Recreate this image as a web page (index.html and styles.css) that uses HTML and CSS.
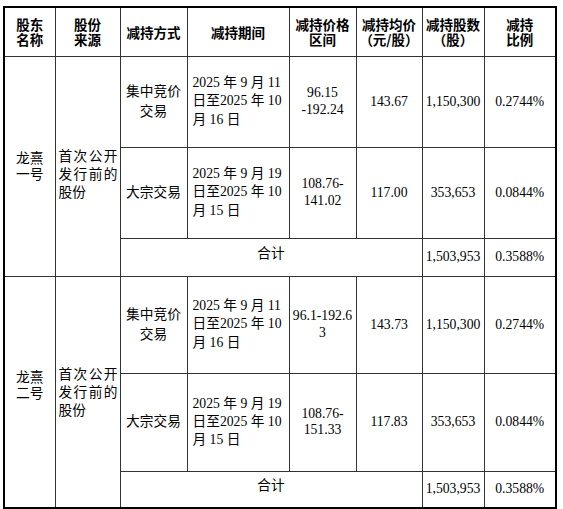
FILE: index.html
```html
<!DOCTYPE html>
<html lang="zh-CN">
<head>
<meta charset="utf-8">
<title>减持情况</title>
<link rel="stylesheet" href="styles.css">
</head>
<body>
<table class="tbl">
  <colgroup>
    <col class="w1"><col class="w2"><col class="w3"><col class="w4">
    <col class="w5"><col class="w6"><col class="w7"><col class="w8">
  </colgroup>
  <thead>
    <tr class="h-head">
      <th><span class="ln">股东</span><span class="ln">名称</span></th>
      <th><span class="ln">股份</span><span class="ln">来源</span></th>
      <th>减持方式</th>
      <th>减持期间</th>
      <th><span class="ln">减持价格</span><span class="ln">区间</span></th>
      <th><span class="ln">减持均价</span><span class="ln">（元/股）</span></th>
      <th><span class="ln">减持股数</span><span class="ln">（股）</span></th>
      <th><span class="ln">减持</span><span class="ln">比例</span></th>
    </tr>
  </thead>
  <tbody>
    <tr class="h-r1">
      <td rowspan="3" class="name">龙熹<br>一号</td>
      <td rowspan="3" class="src">首次公开发行前的股份</td>
      <td class="way">集中竞价<br>交易</td>
      <td class="period">2025 年 9 月 11<br>日至2025 年 10<br>月 16 日</td>
      <td class="range">96.15<br>-192.24</td>
      <td class="num">143.67</td>
      <td class="num">1,150,300</td>
      <td class="num">0.2744%</td>
    </tr>
    <tr class="h-r2">
      <td class="way">大宗交易</td>
      <td class="period">2025 年 9 月 19<br>日至2025 年 10<br>月 15 日</td>
      <td class="range">108.76-<br>141.02</td>
      <td class="num">117.00</td>
      <td class="num">353,653</td>
      <td class="num">0.0844%</td>
    </tr>
    <tr class="h-sum1">
      <td colspan="4" class="total">合计</td>
      <td class="num">1,503,953</td>
      <td class="num">0.3588%</td>
    </tr>
    <tr class="h-r3">
      <td rowspan="3" class="name name2">龙熹<br>二号</td>
      <td rowspan="3" class="src src2">首次公开发行前的股份</td>
      <td class="way">集中竞价<br>交易</td>
      <td class="period">2025 年 9 月 11<br>日至2025 年 10<br>月 16 日</td>
      <td class="range">96.1-192.6<br>3</td>
      <td class="num">143.73</td>
      <td class="num">1,150,300</td>
      <td class="num">0.2744%</td>
    </tr>
    <tr class="h-r4">
      <td class="way">大宗交易</td>
      <td class="period">2025 年 9 月 19<br>日至2025 年 10<br>月 15 日</td>
      <td class="range">108.76-<br>151.33</td>
      <td class="num">117.83</td>
      <td class="num">353,653</td>
      <td class="num">0.0844%</td>
    </tr>
    <tr class="h-sum2">
      <td colspan="4" class="total">合计</td>
      <td class="num">1,503,953</td>
      <td class="num">0.3588%</td>
    </tr>
  </tbody>
</table>
</body>
</html>
```

FILE: styles.css
```css
html, body {
  margin: 0;
  padding: 0;
  background: #ffffff;
}

body {
  padding: 6px 0 0 3px;
  color: #000;
  font-family: "Liberation Serif", "Noto Sans CJK SC", serif;
  font-size: 13.7px;
}

.tbl {
  border-collapse: collapse;
  table-layout: fixed;
  width: 554px;
  border: 2px solid #000;
}

.w1 { width: 51px; }
.w2 { width: 65px; }
.w3 { width: 67px; }
.w4 { width: 102px; }
.w5 { width: 67px; }
.w6 { width: 66px; }
.w7 { width: 62px; }
.w8 { width: 72px; }

.tbl th,
.tbl td {
  border: 1px solid #333333;
  padding: 0;
  text-align: center;
  vertical-align: middle;
}

.tbl th {
  font-family: "Noto Sans CJK SC", sans-serif;
  font-weight: 700;
  font-size: 13.5px;
  line-height: 16px;
}

.ln {
  display: block;
  height: 15px;
  line-height: 15px;
  overflow: visible;
}

.h-head { height: 49px; }
.h-r1 { height: 91px; }
.h-r2 { height: 91px; }
.h-sum1 { height: 38px; }
.h-r3 { height: 97px; }
.h-r4 { height: 98px; }
.h-sum2 { height: 37px; }

.name {
  vertical-align: top !important;
  padding-top: 94px !important;
  line-height: 16.5px;
}

.name2 {
  padding-top: 93px !important;
}

.src {
  vertical-align: top !important;
  text-align: justify !important;
  padding: 91px 2px 0 3px !important;
  line-height: 18px;
}

.src2 {
  padding-top: 89px !important;
}

.way {
  line-height: 20px;
  white-space: nowrap;
}

.period {
  text-align: left !important;
  padding-left: 5px !important;
  line-height: 18.3px;
  white-space: nowrap;
}

.range {
  line-height: 16.3px;
}

.num {
  line-height: 16px;
}

.total {
  padding-bottom: 10px !important;
}
```
